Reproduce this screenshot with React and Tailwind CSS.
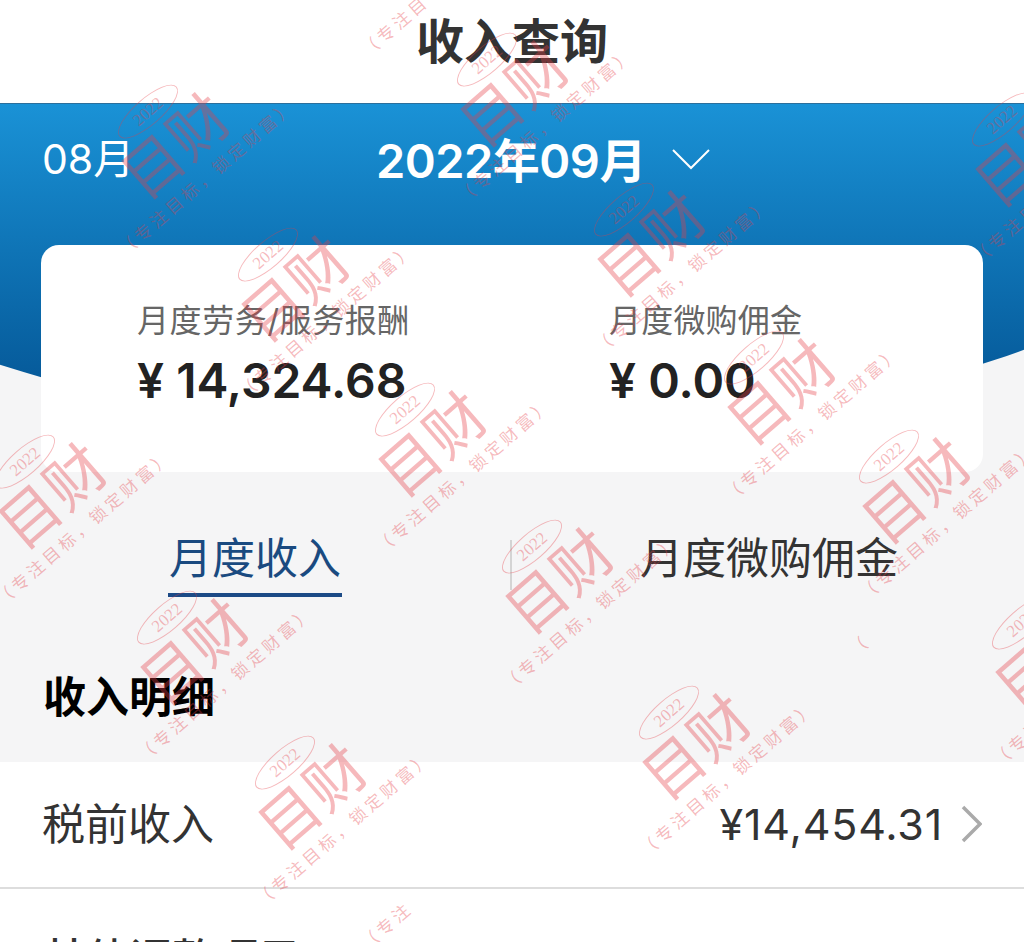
const stamps = [
  'left-[177px] top-[148px]',
  'left-[297px] top-[291px]',
  'left-[434px] top-[446px]',
  'left-[54px] top-[498px]',
  'left-[516px] top-[96px]',
  'left-[653px] top-[246px]',
  'left-[783px] top-[394px]',
  'left-[918px] top-[493px]',
  'left-[1031px] top-[156px]',
  'left-[196px] top-[654px]',
  'left-[314px] top-[799px]',
  'left-[561px] top-[583px]',
  'left-[698px] top-[749px]',
  'left-[1051px] top-[659px]',
];

// one watermark, zero-size box turned around the middle of the two big characters
function Stamp({ pos }) {
  return (
    <div className={`absolute w-0 h-0 -rotate-[41deg] text-[#e63c465c] ${pos}`}>
      <div className="absolute left-[-36px] top-[-60px] w-[76px] h-[27px] rounded-[50%] border border-[#e63c465c] flex items-center justify-center font-['Liberation_Serif',serif] text-[17px] leading-none">
        2022
      </div>
      <div className="absolute left-[-60px] top-[-36px] w-[120px] text-center text-[60px] leading-[68px] whitespace-nowrap">
        目财
      </div>
      <div className="absolute left-[-110px] top-[32px] w-[226px] text-center text-[17px] leading-5 tracking-[3.6px] whitespace-nowrap">
        （专注目标，锁定财富）
      </div>
    </div>
  );
}

function Watermarks() {
  return (
    <div className="absolute inset-0 overflow-hidden pointer-events-none">
      {stamps.map((pos) => (
        <Stamp key={pos} pos={pos} />
      ))}
      {/* cut-off bits of the tiled watermark */}
      <div className="absolute left-[354px] top-[16px] -rotate-[41deg] text-[17px] leading-5 tracking-[3.6px] whitespace-nowrap text-[#e63c465c]">
        （专注目
      </div>
      <div className="absolute left-[356px] top-[916px] -rotate-[41deg] text-[17px] leading-5 tracking-[3.6px] whitespace-nowrap text-[#e63c465c]">
        （专注
      </div>
      <div className="absolute left-[850px] top-[637px] -rotate-[41deg] text-[17px] leading-5 text-[#e63c465c]">（</div>
    </div>
  );
}

export default function App() {
  return (
    <div className="relative w-[1024px] h-[942px] overflow-hidden bg-[#f5f5f6] font-['Inter','Noto_Sans_CJK_SC',sans-serif]">
      {/* 标题 */}
      <header className="h-[103px] bg-white flex items-start justify-center">
        <h1 className="mt-[12px] text-[48px] leading-[60px] font-bold text-[#333333]">收入查询</h1>
      </header>

      {/* 蓝色头部 */}
      <div className="overflow-hidden h-[331px]">
        <div className="w-[1600px] h-[331px] ml-[-310px] pl-[310px] rounded-b-[800px_330px] border-t border-[#2b6f9c] bg-gradient-to-b from-[#1a92d6] to-[#04508f]">
          <div className="w-[1024px] h-[114px] relative flex items-center pl-[376px] text-white">
            <span className="absolute left-[42px] top-[30px] text-[41px] leading-[50px]">08月</span>
            <span className="mt-[-1px] text-[47px] leading-[60px] font-semibold tracking-[-0.5px] whitespace-nowrap">2022年09月</span>
            <svg className="ml-[25px] mt-[-5px]" width="40" height="22" viewBox="0 0 40 22" fill="none">
              <path d="M2 2 L20 20 L38 2" stroke="#ffffff" strokeWidth="2" />
            </svg>
          </div>
        </div>
      </div>

      {/* 月度汇总 */}
      <div className="mx-[41px] mt-[-189px] relative h-[227px] rounded-[18px] bg-white flex pt-[56px]">
        <div className="w-[568px] pl-[96px]">
          <p className="text-[32px] leading-[40px] tracking-[0.6px] text-[#666666]">月度劳务/服务报酬</p>
          <p className="mt-[9px] text-[48px] leading-[62px] font-semibold text-[#222222] whitespace-nowrap">¥ 14,324.68</p>
        </div>
        <div>
          <p className="text-[32px] leading-[40px] tracking-[0.2px] text-[#666666]">月度微购佣金</p>
          <p className="mt-[9px] text-[48px] leading-[62px] font-semibold text-[#222222]">¥ 0.00</p>
        </div>
      </div>

      {/* 切换 */}
      <div className="h-[125px] flex pt-[60px]">
        <div className="w-[510px] flex justify-center">
          <div className="h-[65px] w-[174px] border-b-4 border-[#1c4a86] text-center text-[43px] leading-[52px] text-[#1a4a80]">
            月度收入
          </div>
        </div>
        <div className="w-[2px] h-[50px] mt-[8px] bg-[#d4d4d4]" />
        <div className="pl-[128px] text-[43px] leading-[52px] text-[#333333] whitespace-nowrap">月度微购佣金</div>
      </div>

      {/* 收入明细 */}
      <div className="h-[165px] pt-[70px] pl-[43px] text-[43px] leading-[60px] font-bold text-black">收入明细</div>
      <div className="h-[127px] bg-white border-b-2 border-[#dddddd] flex items-center pl-[42px] pr-[42px] pb-[2px] text-[#333333]">
        <span className="text-[43px] leading-[60px]">税前收入</span>
        <span className="ml-auto text-[43px] leading-[60px] tracking-[0.8px]">¥14,454.31</span>
        <svg className="ml-[18px]" width="21" height="38" viewBox="0 0 21 38" fill="none">
          <path d="M2 2 L19 19 L2 36" stroke="#aaaaaa" strokeWidth="3.5" />
        </svg>
      </div>
      <div className="h-[60px] bg-white pl-[43px] pt-[40px] text-[43px] leading-[60px] font-medium text-[#333333] whitespace-nowrap">
        其他调整项目
      </div>

      <Watermarks />
    </div>
  );
}
